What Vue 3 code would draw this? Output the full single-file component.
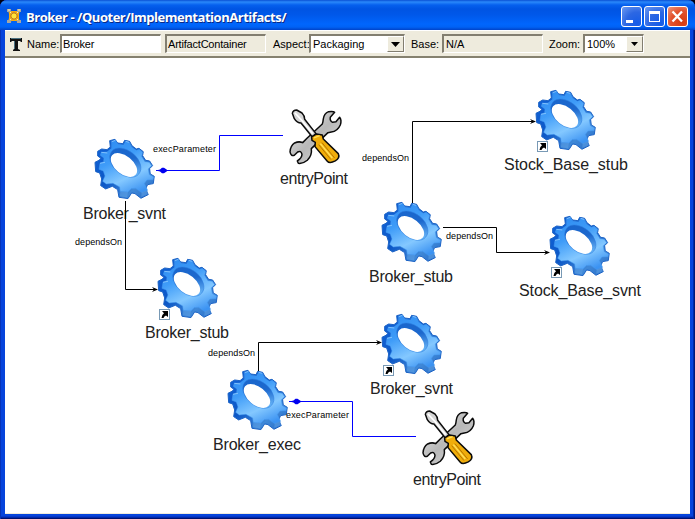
<script setup>
const gears = [
  { x: 95, y: 139, label: 'Broker_svnt', tx: 83, ty: 219, w: 83 },
  { x: 382, y: 202, label: 'Broker_stub', tx: 369, ty: 282, w: 84 },
  { x: 536, y: 90, label: 'Stock_Base_stub', tx: 504, ty: 170, w: 124, link: true },
  { x: 550, y: 216, label: 'Stock_Base_svnt', tx: 519, ty: 296, w: 122, link: true },
  { x: 158, y: 258, label: 'Broker_stub', tx: 145, ty: 338, w: 84, link: true },
  { x: 382, y: 314, label: 'Broker_svnt', tx: 370, ty: 394, w: 83, link: true },
  { x: 228, y: 370, label: 'Broker_exec', tx: 213, ty: 450, w: 88 },
]
const tools = [
  { x: 290, y: 109, tx: 280, ty: 184 },
  { x: 423, y: 410, tx: 413, ty: 485 },
]
const edges = [
  { d: 'M125.5 201V289.5H155', ax: 157, ay: 289.5 },
  { d: 'M412.5 203V121.5H533', ax: 535, ay: 121.5 },
  { d: 'M443 227.5H496.5V252.5H547', ax: 549, ay: 252.5 },
  { d: 'M258.5 371V342.5H379', ax: 381, ay: 342.5 },
]
const links = [
  { d: 'M283 135.5H219.5V170.5H156', ax: 162, ay: 170.5 },
  { d: 'M416 436.5H352.5V401.5H289', ax: 295.5, ay: 401.5 },
]
const captions = [
  { t: 'execParameter', x: 153, y: 152, w: 63 },
  { t: 'dependsOn', x: 75, y: 245, w: 47 },
  { t: 'dependsOn', x: 362, y: 161, w: 47 },
  { t: 'dependsOn', x: 446, y: 239, w: 47 },
  { t: 'dependsOn', x: 208, y: 356, w: 47 },
  { t: 'execParameter', x: 286, y: 418, w: 63 },
]
</script>

<template>
  <div class="window">
    <header class="titlebar">
      <svg class="app" width="14" height="14" viewBox="0 0 14 14">
        <path d="M1 1l3 1h6l3-1-1 4v5l1 3-4-1H5l-4 1 1-4V5z" fill="#f3ab16" />
        <path d="M0 0h4v3H0zM10 0h4v3h-4zM0 11h4v3H0zM10 11h4v3h-4z" fill="#a9a7a0" />
        <path d="M1 1h2M11 1h2M3 3l2 2M11 3L9 5M3 11l2-2M11 11L9 9" stroke="#fff0a8" />
        <circle cx="7" cy="7" r="3.2" fill="#ffe43a" stroke="#b96e18" />
      </svg>
      <h1>Broker - /Quoter/ImplementationArtifacts/</h1>
      <div class="controls">
        <button><svg width="21" height="21"><path d="M5 14h7v3H5z" fill="#fff" /></svg></button>
        <button><svg width="21" height="21"><path d="M5 6h11M5.500 6v10M15.500 6v10M5 15.500h11" stroke="#fff" fill="none" /><path d="M5 5h11v3H5z" fill="#fff" /></svg></button>
        <button class="close"><svg width="21" height="21"><path d="M5.500 5.500l9.500 10M15 5.500l-9.500 10" stroke="#fff" stroke-width="2.300" /></svg></button>
      </div>
    </header>
    <div class="toolbar">
      <svg class="tee" width="12" height="13" viewBox="0 0 12 13">
        <path d="M0 0h12v4h-1L10 3H8v8l2 1v1H3v-1l1-1V3H2L1 4H0z" fill="#111" />
        <path d="M1 .5h10M4.500 3v8" stroke="#4b7180" />
      </svg>
      <span class="lbl name">Name:</span>
      <div class="field white"><span class="v-name">Broker</span></div>
      <div class="field kind"><span class="v-kind">ArtifactContainer</span></div>
      <span class="lbl aspect">Aspect:</span>
      <div class="field white sel wide"><span>Packaging</span><i><svg width="9" height="5"><path d="M0 0h9L4.500 5z" /></svg></i></div>
      <span class="lbl base">Base:</span>
      <div class="field na"><span>N/A</span></div>
      <span class="lbl zoom">Zoom:</span>
      <div class="field white sel pct"><span class="v-pct">100%</span><i><svg width="7" height="4"><path d="M0 0h7L3.500 4z" /></svg></i></div>
    </div>
    <main class="canvas">
      <svg width="685" height="455" viewBox="5 58 685 455">
        <defs>
          <linearGradient id="face" x1="0.2" y1="0" x2="0.7" y2="1">
            <stop offset="0" stop-color="#2f8df2" />
            <stop offset=".35" stop-color="#3f9cf8" />
            <stop offset=".7" stop-color="#84c8ff" />
            <stop offset="1" stop-color="#3c93f2" />
          </linearGradient>
          <linearGradient id="side" x1="0" y1="0" x2="1" y2="1">
            <stop offset="0" stop-color="#1265da" />
            <stop offset=".45" stop-color="#0c57c6" />
            <stop offset=".75" stop-color="#4089d8" />
            <stop offset="1" stop-color="#2468c4" />
          </linearGradient>
          <linearGradient id="bore" x1="0" y1="0" x2="1" y2=".6">
            <stop offset="0" stop-color="#1765cd" />
            <stop offset=".5" stop-color="#1d68cd" />
            <stop offset="1" stop-color="#6bb9fa" />
          </linearGradient>
          <linearGradient id="steel" x1="0" y1="0" x2="1" y2="1">
            <stop offset="0" stop-color="#eee" />
            <stop offset=".5" stop-color="#b8b8b8" />
            <stop offset="1" stop-color="#dedede" />
          </linearGradient>
          <g id="gear" stroke-linejoin="round">
            <path d="M44 5L60 1 68 12 84 14 89 4 104 7 111 20 124 30 132 28 145 38 143 50 152 64 164 66 173 80 164 89 166 105 178 112 175 134 158 137 152 150 160 167 138 178 120 164 110 162 99 179 72 175 68 152 52 142 32 150 17 140 20 120 14 102 2 98 0 70 12 64 18 58 8 51 8 37 20 30 36 32 46 24Z" fill="url(#side)" stroke="#1b62c5" stroke-width="3" />
            <path d="M50 8L61 4 69 16 86 18 92 7 103 10 110 24 124 34 133 31 143 40 140 52 150 68 163 70 170 80 160 90 163 107 176 114 174 122 156 123 148 134 158 154 140 161 122 148 109 149 99 159 76 158 74 144 54 133 34 135 23 127 30 111 25 96 12 91 15 73 26 68 27 57 16 49 19 40 36 39 50 28Z" fill="url(#face)" stroke="#4599f0" stroke-width="1.500" />
            <path d="M76 158L99 159 96 176 75 172ZM140 161L158 154 158 166 139 174Z" fill="#5c9fe2" opacity=".6" />
            <path d="M50 8L61 4M92 7l11 3M19 40l18 2M15 73l15-3" stroke="#8ecaff" stroke-width="2.500" fill="none" />
            <ellipse cx="91" cy="71" rx="53" ry="36" transform="rotate(40 91 71)" fill="url(#bore)" stroke="#2c7bdd" stroke-width="1.500" />
            <ellipse cx="87" cy="78" rx="46" ry="27" transform="rotate(39 87 78)" fill="#fff" />
          </g>
          <g id="tools" stroke="#0b0b0b" stroke-width="4.500" stroke-linejoin="round">
            <path d="M100 30Q102 14 116 8Q130 6 134 10L121 25Q119 36 128 40L138 38L149 25Q156 34 151 48Q143 67 124 69L114 71L64 119Q67 139 52 154Q39 165 25 163L22 156Q36 147 36 136Q33 124 23 129L13 139Q3 143 0 129Q1 111 14 102Q27 96 38 101L51 88L97 45Q99 40 100 30Z" fill="url(#steel)" />
            <path d="M7 13Q9 3 20 3L36 12Q44 20 44 31L78 74 67 84 33 42Q21 42 13 29Z" fill="#d6d6d6" />
            <path d="M15 12L39 38 68 74" fill="none" stroke="#fff" stroke-width="5" />
            <path d="M65 84L80 75 97 78 100 90 145 134Q151 147 136 156Q119 165 112 157L75 113 76 100 66 94Z" fill="#f0ad0b" />
            <path d="M86 107l37 45M96 101l38 46" fill="none" stroke="#b77700" stroke-width="3" />
            <path d="M72 87l17-7M91 104l36 43" fill="none" stroke="#ffe15b" stroke-width="4" />
          </g>
        </defs>
        <g fill="none" stroke="#000">
          <path v-for="(e, i) in edges" :key="i" :d="e.d" />
        </g>
        <path v-for="(e, i) in edges" :key="'a' + i" :d="`M${e.ax - 5} ${e.ay - 2.5}l2 2.500l-2 2.500l6-2.500z`" />
        <g v-for="(l, i) in links" :key="'l' + i">
          <path :d="l.d" fill="none" stroke="#00f" />
          <path :d="`M${l.ax - 6} ${l.ay}l4-1 2-1.800h2l4 2.800-4 2.800h-2l-2-1.800z`" fill="#0000f0" />
        </g>
        <g v-for="(g, i) in gears" :key="'g' + i">
          <use href="#gear" :transform="`translate(${g.x} ${g.y}) scale(.333)`" />
          <g v-if="g.link" :transform="`translate(${g.x + 1} ${g.y + 51})`">
            <rect x=".5" y=".5" width="10" height="10" fill="#fff" stroke="#7899b5" />
            <path d="M3 2h6v6L7 6.500Q5 7 4.500 9H2.500Q2.500 6 5 4.300z" fill="#000" />
          </g>
          <text class="big" :x="g.tx" :y="g.ty" :textLength="g.w">{{ g.label }}</text>
        </g>
        <path d="M125.500 201V222" stroke="#000" />
        <g v-for="(t, i) in tools" :key="'t' + i">
          <use href="#tools" :transform="`translate(${t.x} ${t.y}) scale(.333)`" />
          <text class="big" :x="t.tx" :y="t.ty" textLength="68">entryPoint</text>
        </g>
        <text v-for="(c, i) in captions" :key="'c' + i" class="small" :x="c.x" :y="c.y" :textLength="c.w">{{ c.t }}</text>
      </svg>
    </main>
  </div>
</template>

<style>
body { background: #000010; }
</style>

<style scoped>
.window {
  box-sizing: border-box;
  width: 695px;
  height: 519px;
  padding: 0 5px 5px;
  border-radius: 7px 7px 0 0;
  background: #0644dc;
  box-shadow: inset 1px 0 #0733b8, inset -1px 0 #001878, inset -2px 0 #0029a8, inset 0 -1px #001070, inset 0 -2px #0028a8, inset 0 -3px #0638c8;
  font-family: "Liberation Sans", Arial, sans-serif;
  overflow: hidden;
}
.titlebar {
  display: flex;
  align-items: center;
  height: 30px;
  margin: 0 -5px;
  padding: 0 7px;
  background: linear-gradient(#0a50d4 0, #2a88fa 2px, #0660ee 5px, #0054e3 9px, #0058ea 15px, #0066fd 24px, #0062f5 27px, #0043c8 30px);
}
.app { margin-top: 2px; }
h1 {
  margin: 3px 0 0 5px;
  font: bold 13px/18px "Open Sans", "Noto Sans", sans-serif;
  letter-spacing: -0.47px;
  color: #fff;
  text-shadow: 1px 1px #0a2a86;
  white-space: nowrap;
}
.controls { display: flex; gap: 2px; margin: 3px 0 0 auto; }
button {
  box-sizing: border-box;
  width: 21px;
  height: 21px;
  padding: 0;
  border: 1px solid #fff;
  border-radius: 3px;
  background: radial-gradient(circle at 80% 85%, #155ce8, #2c67e3 50%, #6d9bf2);
}
button svg { display: block; margin: -1px; }
.close { background: radial-gradient(circle at 75% 80%, #d83c0d, #e2532f 55%, #f09a7e); }
.toolbar {
  display: flex;
  align-items: flex-start;
  box-sizing: border-box;
  height: 28px;
  padding: 3px 0 0 5px;
  background: #eeebdd;
  border-top: 1px solid #fff;
  border-bottom: 2px solid #85816f;
  font-size: 11px;
  color: #000;
  white-space: nowrap;
}
.tee { margin-top: 4px; }
.lbl { line-height: 21px; }
.name { width: 33px; margin-left: 5px; }
.aspect { width: 36px; margin-left: 7px; }
.base { width: 31px; margin-left: 6px; }
.zoom { width: 34px; margin-left: 6px; }
.field {
  display: flex;
  box-sizing: border-box;
  width: 101px;
  height: 19px;
  padding-left: 2px;
  border: solid;
  border-width: 2px 1px 1px 2px;
  border-color: #827e70 #fff #fff #827e70;
  background: #eeebdd;
  line-height: 16px;
}
.white { background: #fff; }
.kind { margin-left: 4px; }
.v-name, .v-kind { letter-spacing: -0.2px; margin-left: -1px; }
.sel { justify-content: space-between; }
.wide { width: 96px; }
.pct { width: 61px; }
i {
  display: flex;
  align-items: center;
  justify-content: center;
  box-sizing: border-box;
  width: 17px;
  height: 16px;
  background: #eeebdd;
  border: 1px solid;
  border-color: #fff #827e70 #827e70 #fff;
}
.canvas { height: 455px; background: #fff; border-bottom: 1px solid #eeebdd; }
.canvas svg { display: block; }
.big { font-size: 16px; fill: #222; }
.small { font-size: 9px; fill: #000; }
</style>
